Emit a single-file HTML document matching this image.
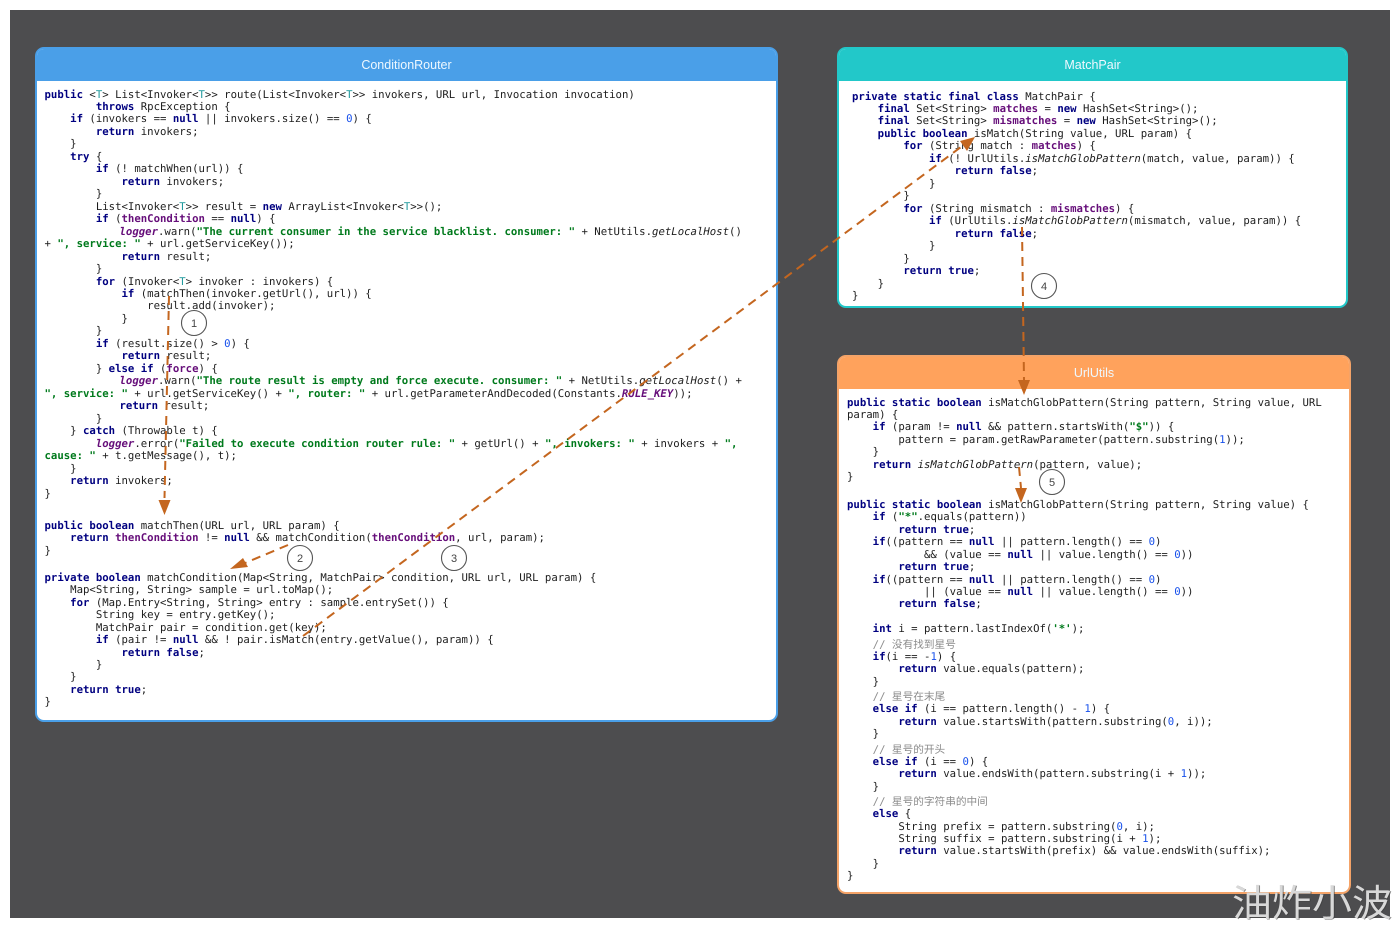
<!DOCTYPE html>
<html lang="zh"><head><meta charset="utf-8"><title>ConditionRouter</title>
<style>
html,body{margin:0;padding:0;background:#fff}
body{width:1400px;height:928px;position:relative;overflow:hidden;font-family:"Liberation Sans",sans-serif}
#bg{position:absolute;left:10px;top:10px;width:1380px;height:908px;background:#4d4d4f}
.p{position:absolute;box-sizing:border-box;background:#fff;border:2px solid;border-radius:9px;overflow:hidden}
.h{position:absolute;left:-2px;right:-2px;top:-2px;height:34px;color:#eef8ff;font-size:12.5px;line-height:37px;text-align:center}
pre{position:absolute;margin:0;font:10.67px/12.47px "DejaVu Sans Mono","Noto Sans CJK SC",monospace;color:#1c1c1c;text-rendering:geometricPrecision;white-space:pre;filter:blur(.3px)}
.k{color:#000080;font-weight:bold}
.s{color:#007a1c;font-weight:bold}
.f{color:#660e7a;font-weight:bold}
.l{color:#660e7a;font-weight:bold;font-style:italic}
.t{color:#20999d}
.n{color:#1750eb}
.i{font-style:italic}
.b{display:inline-block;margin-left:-2px}
.c{display:block;height:15px;line-height:17px;color:#8c8c8c;font-size:10.67px}
svg{position:absolute;left:0;top:0}
#wm{position:absolute;left:1232px;top:879px;font:400 40px/46px "Noto Sans CJK SC","WenQuanYi Zen Hei",sans-serif;color:#d8d8d8;white-space:nowrap;text-shadow:1px 1px 0 rgba(60,60,60,.6);transform:scaleY(.92);transform-origin:0 0}
</style></head><body>
<div id="bg"></div>
<div class="p" style="left:35px;top:47px;width:743px;height:675px;border-color:#4a9fe8"><div class="h" style="background:#4a9fe8">ConditionRouter</div></div>
<div class="p" style="left:837px;top:47px;width:511px;height:261px;border-color:#22c8c9"><div class="h" style="background:#22c8c9">MatchPair</div></div>
<div class="p" style="left:837px;top:355px;width:514px;height:539px;border-color:#f4a368"><div class="h" style="background:#ffa25c">UrlUtils</div></div>

<pre style="left:44.5px;top:88.5px"><span class="k">public</span> &lt;<span class="t">T</span>&gt; List&lt;Invoker&lt;<span class="t">T</span>&gt;&gt; route(List&lt;Invoker&lt;<span class="t">T</span>&gt;&gt; invokers, URL url, Invocation invocation)
        <span class="k">throws</span> RpcException {
    <span class="k">if</span> (invokers == <span class="k">null</span> || invokers.size() == <span class="n">0</span>) {
        <span class="k">return</span> invokers;
    }
    <span class="k">try</span> {
        <span class="k">if</span> (! matchWhen(url)) {
            <span class="k">return</span> invokers;
        }
        List&lt;Invoker&lt;<span class="t">T</span>&gt;&gt; result = <span class="k">new</span> ArrayList&lt;Invoker&lt;<span class="t">T</span>&gt;&gt;();
        <span class="k">if</span> (<span class="f">thenCondition</span> == <span class="k">null</span>) {
<span class="b">            <span class="l">logger</span>.warn(<span class="s">"The current consumer in the service blacklist. consumer: "</span> + NetUtils.<span class="i">getLocalHost</span>()</span>
+ <span class="s">", service: "</span> + url.getServiceKey());
            <span class="k">return</span> result;
        }
        <span class="k">for</span> (Invoker&lt;<span class="t">T</span>&gt; invoker : invokers) {
            <span class="k">if</span> (matchThen(invoker.getUrl(), url)) {
                result.add(invoker);
            }
        }
        <span class="k">if</span> (result.size() &gt; <span class="n">0</span>) {
            <span class="k">return</span> result;
        } <span class="k">else if</span> (<span class="f">force</span>) {
<span class="b">            <span class="l">logger</span>.warn(<span class="s">"The route result is empty and force execute. consumer: "</span> + NetUtils.<span class="i">getLocalHost</span>() +</span>
<span class="s">", service: "</span> + url.getServiceKey() + <span class="s">", router: "</span> + url.getParameterAndDecoded(Constants.<span class="l">RULE_KEY</span>));
<span class="b">            <span class="k">return</span> result;</span>
        }
    } <span class="k">catch</span> (Throwable t) {
        <span class="l">logger</span>.error(<span class="s">"Failed to execute condition router rule: "</span> + getUrl() + <span class="s">", invokers: "</span> + invokers + <span class="s">",</span>
<span class="s">cause: "</span> + t.getMessage(), t);
    }
    <span class="k">return</span> invokers;
}</pre>
<pre style="left:44.5px;top:519.700px"><span class="k">public boolean</span> matchThen(URL url, URL param) {
    <span class="k">return</span> <span class="f">thenCondition</span> != <span class="k">null</span> &amp;&amp; matchCondition(<span class="f">thenCondition</span>, url, param);
}</pre>
<pre style="left:44.5px;top:571.700px"><span class="k">private boolean</span> matchCondition(Map&lt;String, MatchPair&gt; condition, URL url, URL param) {
    Map&lt;String, String&gt; sample = url.toMap();
    <span class="k">for</span> (Map.Entry&lt;String, String&gt; entry : sample.entrySet()) {
        String key = entry.getKey();
        MatchPair pair = condition.get(key);
        <span class="k">if</span> (pair != <span class="k">null</span> &amp;&amp; ! pair.isMatch(entry.getValue(), param)) {
            <span class="k">return false</span>;
        }
    }
    <span class="k">return true</span>;
}</pre>

<pre style="left:852px;top:90.500px"><span class="k">private static final class</span> MatchPair {
    <span class="k">final</span> Set&lt;String&gt; <span class="f">matches</span> = <span class="k">new</span> HashSet&lt;String&gt;();
    <span class="k">final</span> Set&lt;String&gt; <span class="f">mismatches</span> = <span class="k">new</span> HashSet&lt;String&gt;();
    <span class="k">public boolean</span> isMatch(String value, URL param) {
        <span class="k">for</span> (String match : <span class="f">matches</span>) {
            <span class="k">if</span> (! UrlUtils.<span class="i">isMatchGlobPattern</span>(match, value, param)) {
                <span class="k">return false</span>;
            }
        }
        <span class="k">for</span> (String mismatch : <span class="f">mismatches</span>) {
            <span class="k">if</span> (UrlUtils.<span class="i">isMatchGlobPattern</span>(mismatch, value, param)) {
                <span class="k">return false</span>;
            }
        }
        <span class="k">return true</span>;
    }
}</pre>

<pre style="left:847px;top:396.500px"><span class="k">public static boolean</span> isMatchGlobPattern(String pattern, String value, URL
param) {
    <span class="k">if</span> (param != <span class="k">null</span> &amp;&amp; pattern.startsWith(<span class="s">"$"</span>)) {
        pattern = param.getRawParameter(pattern.substring(<span class="n">1</span>));
    }
    <span class="k">return</span> <span class="i">isMatchGlobPattern</span>(pattern, value);
}</pre>
<pre style="left:847px;top:498.700px"><span class="k">public static boolean</span> isMatchGlobPattern(String pattern, String value) {
    <span class="k">if</span> (<span class="s">"*"</span>.equals(pattern))
        <span class="k">return true</span>;
    <span class="k">if</span>((pattern == <span class="k">null</span> || pattern.length() == <span class="n">0</span>)
            &amp;&amp; (value == <span class="k">null</span> || value.length() == <span class="n">0</span>))
        <span class="k">return true</span>;
    <span class="k">if</span>((pattern == <span class="k">null</span> || pattern.length() == <span class="n">0</span>)
            || (value == <span class="k">null</span> || value.length() == <span class="n">0</span>))
        <span class="k">return false</span>;

    <span class="k">int</span> i = pattern.lastIndexOf(<span class="s">'*'</span>);
<span class="c">    // 没有找到星号</span>    <span class="k">if</span>(i == -<span class="n">1</span>) {
        <span class="k">return</span> value.equals(pattern);
    }
<span class="c">    // 星号在末尾</span>    <span class="k">else if</span> (i == pattern.length() - <span class="n">1</span>) {
        <span class="k">return</span> value.startsWith(pattern.substring(<span class="n">0</span>, i));
    }
<span class="c">    // 星号的开头</span>    <span class="k">else if</span> (i == <span class="n">0</span>) {
        <span class="k">return</span> value.endsWith(pattern.substring(i + <span class="n">1</span>));
    }
<span class="c">    // 星号的字符串的中间</span>    <span class="k">else</span> {
        String prefix = pattern.substring(<span class="n">0</span>, i);
        String suffix = pattern.substring(i + <span class="n">1</span>);
        <span class="k">return</span> value.startsWith(prefix) &amp;&amp; value.endsWith(suffix);
    }
}</pre>

<svg width="1400" height="928" viewBox="0 0 1400 928">
<g fill="none" stroke="#c4661f" stroke-width="2" stroke-dasharray="9 6">
<path d="M169 296L164.500 498"/>
<path d="M288 545L245 563"/>
<path d="M303 636L965 144"/>
<path d="M1022 227L1024 380"/>
<path d="M1019 467L1021 488"/>
</g>
<g fill="#c4661f">
<path d="M158.500 500L170.500 500L164.500 515Z"/>
<path d="M230 569L243 558L248 567Z"/>
<path d="M975 137L960 141L967 151Z"/>
<path d="M1018 380L1030 380L1024 395Z"/>
<path d="M1015 488L1027 488L1021 503Z"/>
</g>
<g fill="none" stroke="#555" stroke-width="1.100">
<circle cx="194" cy="323" r="12.500"/>
<circle cx="300" cy="558" r="12.500"/>
<circle cx="454" cy="558" r="12.500"/>
<circle cx="1044" cy="286" r="12.500"/>
<circle cx="1052" cy="482" r="12.500"/>
</g>
<g font-family="Liberation Sans,sans-serif" font-size="11" fill="#444" text-anchor="middle">
<text x="194" y="327">1</text>
<text x="300" y="562">2</text>
<text x="454" y="562">3</text>
<text x="1044" y="290">4</text>
<text x="1052" y="486">5</text>
</g>
</svg>
<div id="wm">油炸小波</div>
</body></html>
